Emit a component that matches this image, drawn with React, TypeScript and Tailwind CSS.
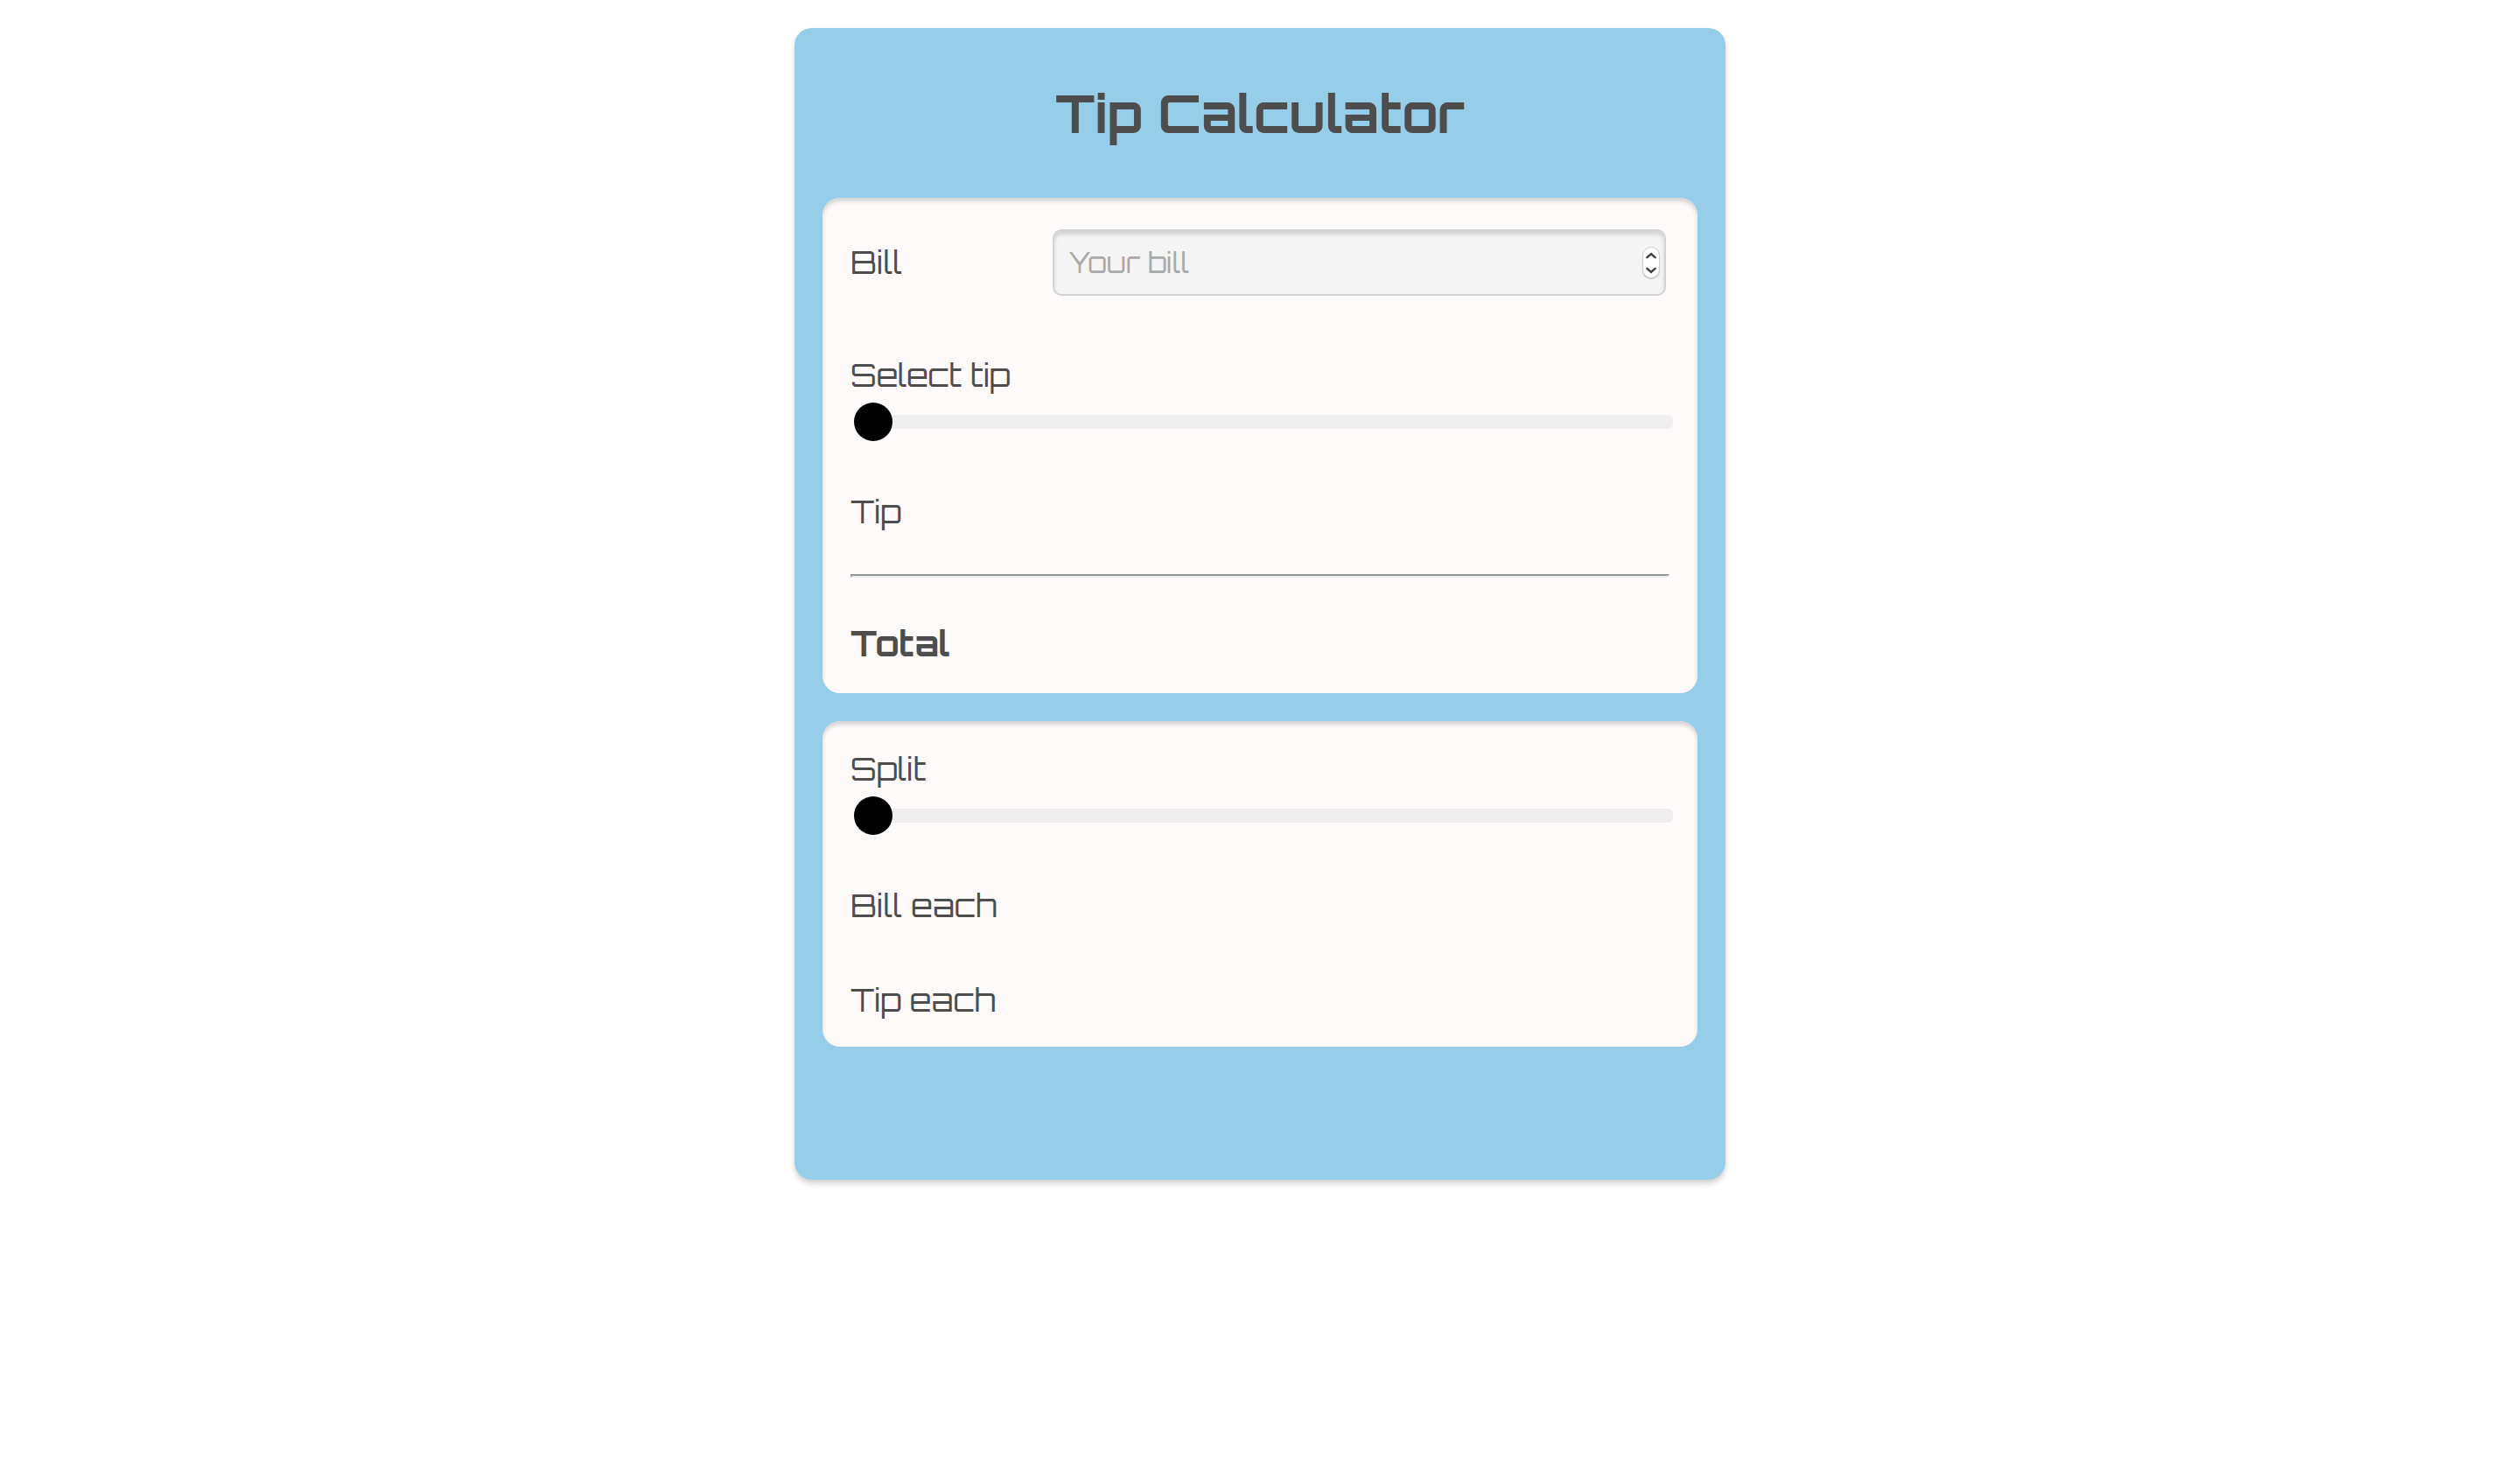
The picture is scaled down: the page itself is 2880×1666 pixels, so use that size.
import { useRef, useState } from "react";

const panel =
  "rounded-[20px] bg-[#fffafa] px-8 shadow-[inset_0_4px_4px_#d3d3d3]";

const label = "text-[36px] leading-[46px]";

const slider =
  "mt-2 ml-1 block h-11 w-full cursor-pointer appearance-none bg-transparent outline-none " +
  "[&::-webkit-slider-runnable-track]:h-4 [&::-webkit-slider-runnable-track]:rounded-[6px] [&::-webkit-slider-runnable-track]:bg-[#eeeeee] " +
  "[&::-webkit-slider-thumb]:-mt-[14px] [&::-webkit-slider-thumb]:size-11 [&::-webkit-slider-thumb]:appearance-none [&::-webkit-slider-thumb]:rounded-full [&::-webkit-slider-thumb]:bg-black";

type ResultProps = { id: string; name: string; value: string; className: string };

function Result({ id, name, value, className }: ResultProps) {
  return (
    <div className={`flex justify-between ${className}`}>
      <label htmlFor={id}>{name}</label>
      <output id={id}>{value}</output>
    </div>
  );
}

export default function App() {
  const [bill, setBill] = useState("");
  const [tip, setTip] = useState(0);
  const [people, setPeople] = useState(1);
  const billInput = useRef<HTMLInputElement>(null);

  const amount = Number(bill);
  const tipAmount = (amount * tip) / 100;
  const money = (n: number) => (amount > 0 ? `$${n.toFixed(2)}` : "");
  const step = (by: number) => {
    setBill(String(Math.max(0, amount + by)));
    billInput.current?.focus();
  };

  return (
    <div className="min-h-screen bg-white px-8 pt-8 pb-8 font-['Orbitron','DejaVu_Sans',sans-serif] text-[#4d4d4d]">
      <main className="mx-auto w-full max-w-[1064px] rounded-[20px] bg-[#96cee9] px-8 pt-[61px] pb-[152px] shadow-[0_4px_6px_#cfcfcf]">
        <h1 className="text-center text-[60px] leading-[72px] font-bold">Tip Calculator</h1>

        <section className={`mt-[61px] pt-9 pb-[33px] ${panel}`}>
          <div className="flex items-center pr-1">
            <label htmlFor="bill" className={`w-[231px] shrink-0 ${label}`}>
              Bill
            </label>
            <div className="relative flex-1">
              <input
                ref={billInput}
                id="bill"
                type="number"
                min="0"
                placeholder="Your bill"
                value={bill}
                onChange={(e) => setBill(e.target.value)}
                className="block h-[76px] w-full appearance-none rounded-[10px] border-2 border-[#d3d3d3] bg-[#f4f4f4] pr-12 pl-4 text-[32px] shadow-[inset_0_4px_4px_#d3d3d3] outline-none [-moz-appearance:textfield] placeholder:text-[#a9a9a9] [&::-webkit-inner-spin-button]:appearance-none"
              />
              <div className="absolute top-1/2 right-[7px] flex h-9 w-5 -translate-y-1/2 flex-col overflow-hidden rounded-full border border-[#d0d0d0] bg-white text-[#3f3f3f] shadow-[0_1px_1px_#bbbbbb]">
                <button type="button" aria-label="Increase bill" onClick={() => step(1)} className="flex flex-1 items-center justify-center">
                  <svg viewBox="0 0 12 8" className="h-2 w-3" fill="none" stroke="currentColor" strokeWidth="2.4">
                    <path d="M1.4 6.2 6 2l4.6 4.2" strokeLinecap="round" />
                  </svg>
                </button>
                <button type="button" aria-label="Decrease bill" onClick={() => step(-1)} className="flex flex-1 items-center justify-center">
                  <svg viewBox="0 0 12 8" className="h-2 w-3" fill="none" stroke="currentColor" strokeWidth="2.4">
                    <path d="M1.4 1.8 6 6l4.6-4.2" strokeLinecap="round" />
                  </svg>
                </button>
              </div>
            </div>
          </div>

          <label htmlFor="tip-rate" className={`mt-[68px] block ${label}`}>
            Select tip
          </label>
          <input id="tip-rate" type="range" min="0" max="100" value={tip} onChange={(e) => setTip(Number(e.target.value))} className={slider} />

          <Result id="tip-amount" name="Tip" value={money(tipAmount)} className={`mt-[58px] ${label}`} />
          <hr className="mt-12 h-1 border-2 border-t-[#959897] border-r-[#eeeeee] border-b-[#eeeeee] border-l-[#959897]" />
          <Result id="total" name="Total" value={money(amount + tipAmount)} className="mt-[51px] text-[40px] leading-[48px] font-bold" />
        </section>

        <section className={`mt-8 pt-8 pb-[30px] ${panel}`}>
          <label htmlFor="split" className={`block ${label}`}>
            Split
          </label>
          <input id="split" type="range" min="1" max="10" value={people} onChange={(e) => setPeople(Number(e.target.value))} className={slider} />

          <Result id="bill-each" name="Bill each" value={money((amount + tipAmount) / people)} className={`mt-[58px] ${label}`} />
          <Result id="tip-each" name="Tip each" value={money(tipAmount / people)} className={`mt-[62px] ${label}`} />
        </section>
      </main>
    </div>
  );
}
